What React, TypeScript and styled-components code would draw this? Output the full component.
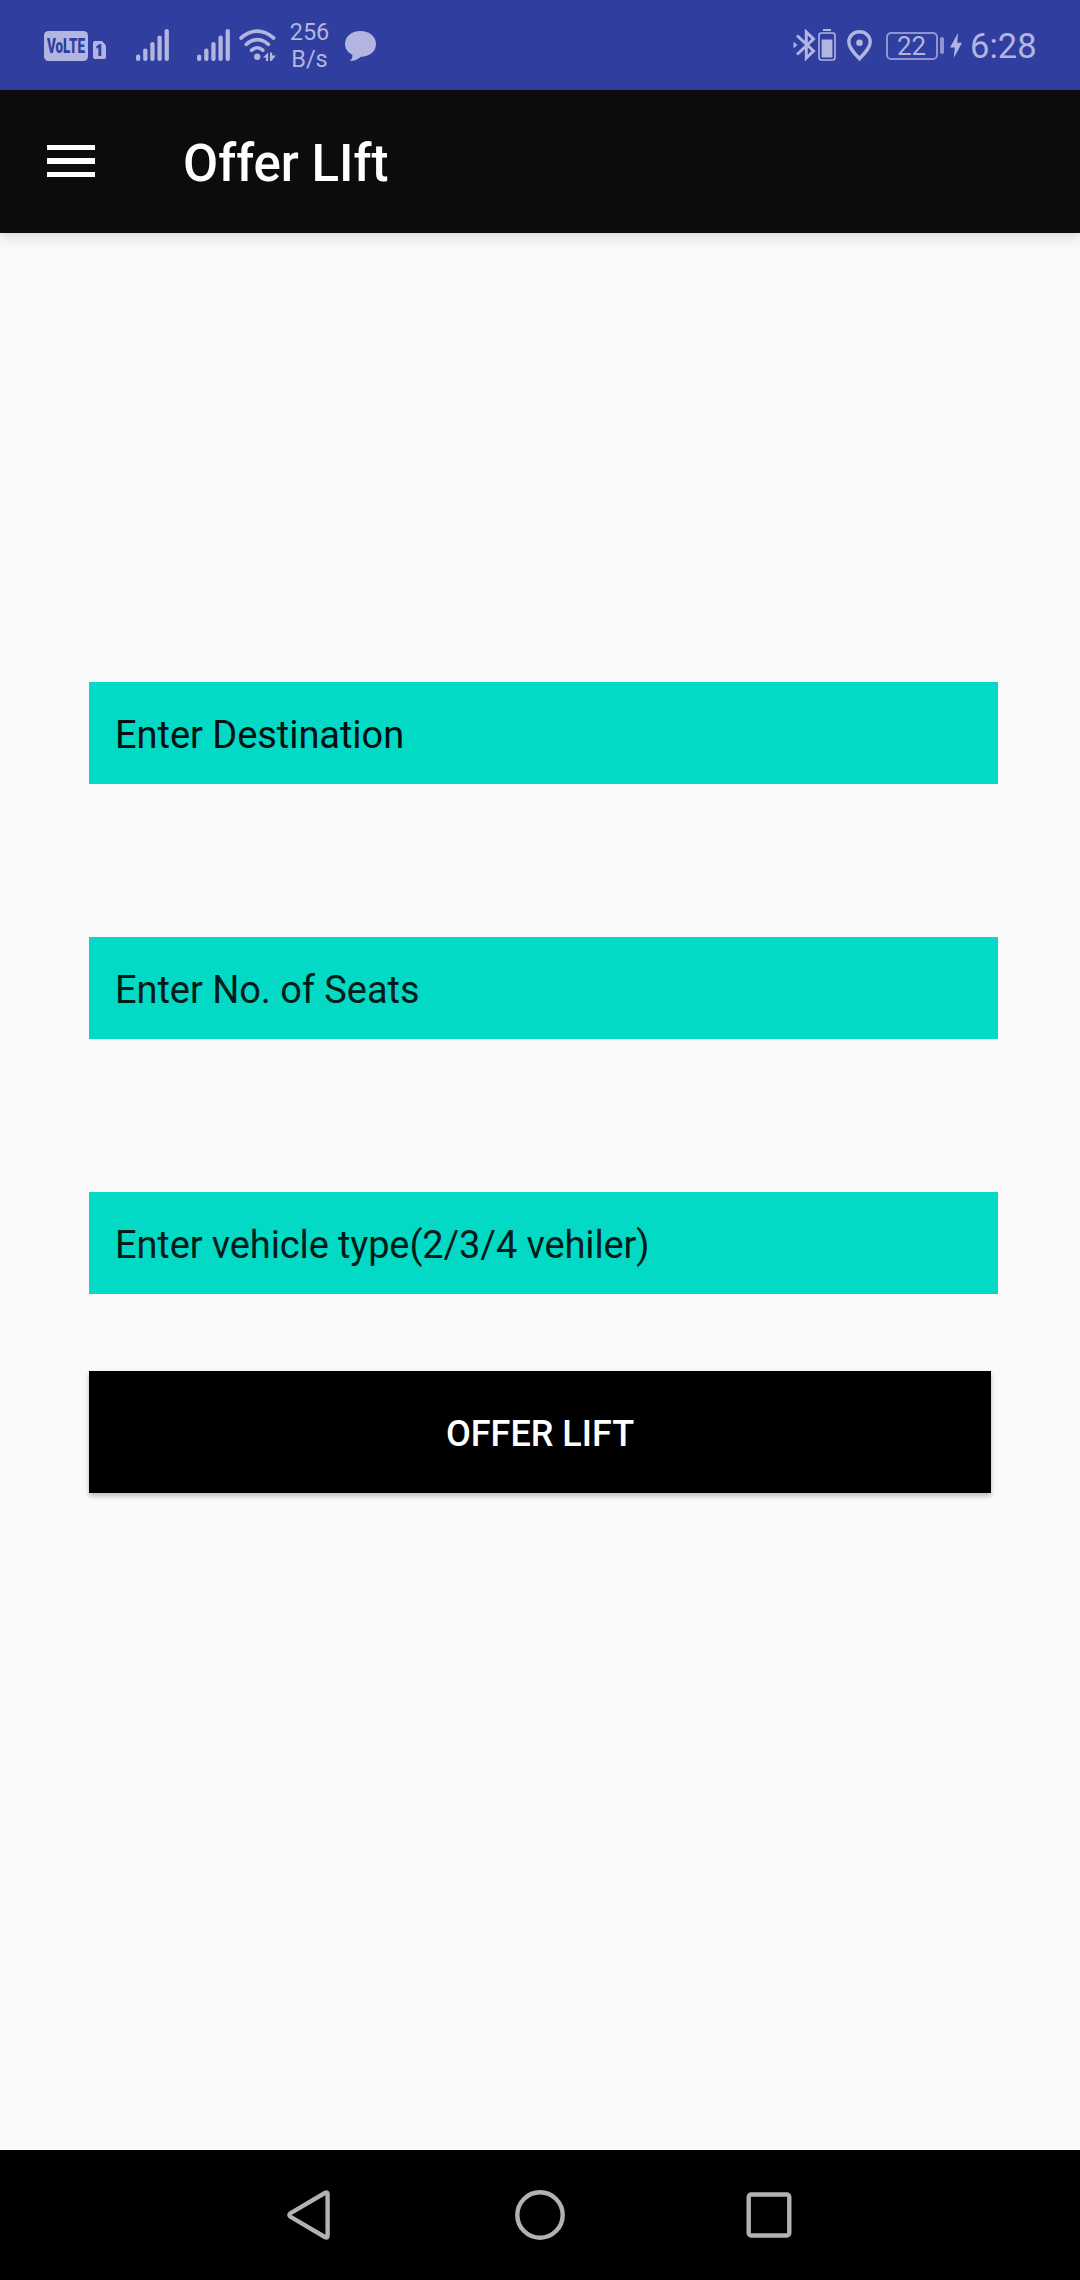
import React from "react";
import styled, { createGlobalStyle } from "styled-components";

const tint = "#b1b5df";

const GlobalStyle = createGlobalStyle`
  *, *::before, *::after { box-sizing: border-box; }
  body { margin: 0; background: #fafafa; }
`;

const Screen = styled.div`
  display: flex;
  flex-direction: column;
  width: 1080px;
  height: 2280px;
  background: #fafafa;
  font-family: Roboto, "Noto Sans", sans-serif;
`;

const StatusBar = styled.header`
  display: flex;
  justify-content: space-between;
  height: 90px;
  padding: 0 45px 0 44px;
  background: #303e9f;
  color: ${tint};
`;

const StatusGroup = styled.div`
  display: flex;
  align-items: flex-start;
`;

const Glyph = styled.svg<{ $top: number; $left?: number }>`
  display: block;
  flex: none;
  overflow: visible;
  margin-top: ${(p) => p.$top}px;
  margin-left: ${(p) => p.$left ?? 0}px;
`;

const NetSpeed = styled.div`
  display: flex;
  flex-direction: column;
  align-items: center;
  width: 38px;
  margin: 19px 0 0 15px;
  font-size: 23.5px;
  line-height: 27px;
  white-space: nowrap;
`;

const BatteryLevel = styled.div`
  width: 52px;
  height: 28px;
  margin: 31.5px 0 0 14px;
  border: 2px solid #8f95cf;
  border-radius: 5px;
  font-size: 26px;
  line-height: 24px;
  text-align: center;
`;

const BatteryNub = styled.div`
  width: 4px;
  height: 17px;
  margin: 37px 0 0 2px;
  border-radius: 2px;
  background: #8f95cf;
`;

const Clock = styled.div`
  width: 65px;
  margin: 26px 0 0 8px;
  font-size: 34.5px;
  line-height: 40px;
  white-space: nowrap;
`;

const AppBar = styled.div`
  display: flex;
  align-items: center;
  height: 143px;
  padding-left: 47px;
  background: #0c0c0c;
  box-shadow: 0 4px 12px rgba(0, 0, 0, 0.15);
`;

const MenuButton = styled.div`
  display: flex;
  flex-direction: column;
  gap: 8px;
  width: 48px;
  margin-top: -1px;
`;

const MenuLine = styled.span`
  height: 5.3px;
  background: #fff;
`;

const Title = styled.h1`
  margin: 4px 0 0 88px;
  color: #fff;
  font-size: 51px;
  font-weight: 500;
  line-height: 60px;
`;

const Form = styled.main`
  display: flex;
  flex: 1;
  flex-direction: column;
  align-items: flex-start;
  padding: 449px 0 0 89px;
`;

const Field = styled.div<{ $ink: string; $tracking: number }>`
  width: 909px;
  height: 102px;
  margin-bottom: 153px;
  padding: 31px 26px 0;
  background: #03dac6;
  color: ${(p) => p.$ink};
  font-size: 38px;
  letter-spacing: ${(p) => p.$tracking}px;
  line-height: 45px;
  white-space: nowrap;

  &:last-of-type { margin-bottom: 77px; }
`;

const SubmitButton = styled.button`
  width: 902px;
  height: 122px;
  padding: 4px 0 0;
  border: 0;
  background: #000;
  box-shadow: 0 3px 5px rgba(0, 0, 0, 0.25);
  color: #fff;
  font: 500 36px/42px Roboto, "Noto Sans", sans-serif;
  text-transform: uppercase;
`;

const NavBar = styled.nav`
  display: flex;
  align-items: flex-start;
  height: 130px;
  padding-left: 287px;
  background: #000;
`;

const fields = [
  { hint: "Enter Destination", ink: "#00110f", tracking: -0.04 },
  { hint: "Enter No. of Seats", ink: "#001c19", tracking: -0.05 },
  { hint: "Enter vehicle type(2/3/4 vehiler)", ink: "#001c19", tracking: -0.12 },
];

const Volte = () => (
  <Glyph $top={31} width="44" height="30" viewBox="0 0 44 30">
    <rect width="44" height="30" rx="4.5" fill={tint} />
    <text
      x="3"
      y="21.8"
      textLength="38"
      lengthAdjust="spacingAndGlyphs"
      fill="#303e9f"
      fontFamily="Roboto, sans-serif"
      fontSize="20"
      fontWeight="900"
    >
      VoLTE
    </text>
  </Glyph>
);

const SimCard = () => (
  <Glyph $top={41} $left={5} width="13" height="18" viewBox="0 0 13 18">
    <path d="M2 0H9L13 4.5V16a2 2 0 0 1-2 2H2a2 2 0 0 1-2-2V2a2 2 0 0 1 2-2Z" fill={tint} />
    <path d="M3.3 5.2 6.6 3H8.3V15H5.4V6.6L3.3 7.7Z" fill="#303e9f" />
  </Glyph>
);

const signalHeights = [6.5, 12.5, 19, 25.5, 32];

const Signal = ({ left }: { left: number }) => (
  <Glyph $top={29} $left={left} width="33" height="32" viewBox="0 0 33 32">
    {signalHeights.map((h, i) => (
      <rect key={h} x={i * 7.15} y={32 - h} width="4.3" height={h} rx="2.1" fill={tint} />
    ))}
  </Glyph>
);

const Wifi = () => (
  <Glyph $top={29} $left={9} width="37" height="32" viewBox="0 0 37 32">
    <g fill="none" stroke={tint} strokeWidth="3.6" strokeLinecap="round">
      <path d="M2 9Q18.2-4.6 34.6 9" />
      <path d="M7.2 15.3Q18.2 6 29.4 15.3" />
      <path d="M12.6 21.2Q18.2 16.3 23.8 21.2" />
    </g>
    <circle cx="18.2" cy="27.8" r="3.2" fill={tint} />
    <path d="M29.2 23.5V32H27V28.5H24ZM31 23.5V32H32.5L37 26.5H33.2V23.5Z" fill={tint} />
  </Glyph>
);

const Chat = () => (
  <Glyph $top={31} $left={16} width="31" height="30" viewBox="0 0 31 30">
    <path
      d="M15.5 0C24.3 0 31 5.4 31 13S24.3 25.8 16 25.8C12.7 28.6 9 30 4.8 30C7 28 7.8 26 7.3 23.7C2.7 21.5 0 17.5 0 13C0 5.4 6.7 0 15.5 0Z"
      fill={tint}
    />
  </Glyph>
);

const Bluetooth = () => (
  <Glyph $top={29} width="22" height="32" viewBox="0 0 22 32">
    <path
      d="M3 6.5 19.5 22 12.3 29V3L19.5 10 3 25.5"
      fill="none"
      stroke={tint}
      strokeWidth="3"
    />
    <path d="M-.5 12.7 3.5 16-.5 19.3Z" fill={tint} />
  </Glyph>
);

const SmallBattery = () => (
  <Glyph $top={29} $left={2} width="18" height="32" viewBox="0 0 18 32">
    <rect x="5" width="8" height="2" fill={tint} />
    <rect x="1" y="4" width="16" height="27" rx="2.5" fill="none" stroke={tint} strokeWidth="1.6" />
    <rect x="3.6" y="10.5" width="10.8" height="18" fill={tint} />
  </Glyph>
);

const Pin = () => (
  <Glyph $top={29.5} $left={11} width="25" height="31" viewBox="0 0 25 31">
    <path
      d="M12.5 1.8C6.3 1.8 1.8 6.3 1.8 12.1C1.8 17 5.5 21.5 12.5 28.7C19.5 21.5 23.2 17 23.2 12.1C23.2 6.3 18.7 1.8 12.5 1.8Z"
      fill="none"
      stroke={tint}
      strokeWidth="3.4"
    />
    <circle cx="12.5" cy="12.7" r="3.3" fill={tint} />
  </Glyph>
);

const Bolt = () => (
  <Glyph $top={33} $left={6.5} width="12" height="25" viewBox="0 0 12 25">
    <path d="M8 0 0 14.5H4.8L3.8 25 12 9.8H7.2Z" fill={tint} />
  </Glyph>
);

const navStroke = { fill: "none", stroke: "#b2b2b2", strokeWidth: 4.4 };

export default function App() {
  return (
    <Screen>
      <GlobalStyle />
      <StatusBar>
        <StatusGroup>
          <Volte />
          <SimCard />
          <Signal left={29.5} />
          <Signal left={28} />
          <Wifi />
          <NetSpeed>
            <span>256</span>
            <span>B/s</span>
          </NetSpeed>
          <Chat />
        </StatusGroup>
        <StatusGroup>
          <Bluetooth />
          <SmallBattery />
          <Pin />
          <BatteryLevel>22</BatteryLevel>
          <BatteryNub />
          <Bolt />
          <Clock>6:28</Clock>
        </StatusGroup>
      </StatusBar>
      <AppBar>
        <MenuButton>
          <MenuLine />
          <MenuLine />
          <MenuLine />
        </MenuButton>
        <Title>Offer LIft</Title>
      </AppBar>
      <Form>
        {fields.map((f) => (
          <Field key={f.hint} $ink={f.ink} $tracking={f.tracking}>
            {f.hint}
          </Field>
        ))}
        <SubmitButton>Offer Lift</SubmitButton>
      </Form>
      <NavBar>
        <Glyph $top={40} width="43" height="50" viewBox="0 0 43 50">
          <path
            d="M40.6 4.2V45.8Q40.6 48.2 38.2 47.2L3.5 26.8Q1.2 25 3.5 23.2L38.2 2.8Q40.6 1.8 40.6 4.2Z"
            {...navStroke}
          />
        </Glyph>
        <Glyph $top={40} $left={185} width="50" height="50" viewBox="0 0 50 50">
          <circle cx="25" cy="25" r="22.7" {...navStroke} />
        </Glyph>
        <Glyph $top={42} $left={181} width="45" height="46" viewBox="0 0 45 46">
          <rect x="2.7" y="2.5" width="40.6" height="41" rx="2.5" {...navStroke} />
        </Glyph>
      </NavBar>
    </Screen>
  );
}
